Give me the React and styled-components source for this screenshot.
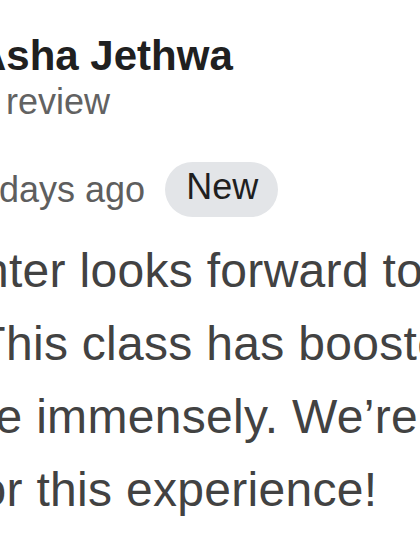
import React from 'react';
import styled, { createGlobalStyle } from 'styled-components';

const GlobalStyle = createGlobalStyle`
    html, body {
        margin: 0;
        padding: 0;
        background: #ffffff;
    }
    body {
        font-family: 'Liberation Sans', Arial, sans-serif;
    }
`;

const Viewport = styled.div`
    width: 420px;
    height: 560px;
    overflow: hidden;
    background: #ffffff;
`;

// the review card is zoomed in and runs past the left edge of the view
const ReviewCard = styled.article`
    margin-left: -126px;
    padding-top: 31px;
    display: flex;
    flex-direction: column;
    width: 1000px;
`;

const AuthorRow = styled.header`
    display: flex;
    align-items: flex-start;
    gap: 18px;
`;

const Avatar = styled.div`
    width: 84px;
    height: 84px;
    flex: none;
    border-radius: 50%;
    background: #7b5ea7;
    color: #fff;
    font-size: 40px;
    display: flex;
    align-items: center;
    justify-content: center;
`;

const AuthorInfo = styled.div`
    display: flex;
    flex-direction: column;
`;

const AuthorName = styled.h3`
    margin: 0;
    font-size: 42px;
    line-height: 49px;
    font-weight: 700;
    color: #202020;
    white-space: nowrap;
`;

const AuthorMeta = styled.span`
    font-size: 36px;
    line-height: 44px;
    color: #626262;
    white-space: nowrap;
`;

const RatingRow = styled.div`
    display: flex;
    align-items: center;
    gap: 12px;
    margin-top: 38px;
    height: 55px;
`;

const Stars = styled.div`
    display: flex;
    gap: 2px;
    width: 83px;
    flex: none;
`;

const PostedAt = styled.span`
    font-size: 36px;
    line-height: 44px;
    color: #5e5e5e;
    white-space: nowrap;
`;

const NewBadge = styled.span`
    display: inline-flex;
    align-items: center;
    box-sizing: border-box;
    height: 55px;
    padding: 0 20px 5px 21px;
    margin-left: 8px;
    border-radius: 28px;
    background: #e3e5e8;
    color: #1f1f1f;
    font-size: 36px;
    line-height: 44px;
`;

const ReviewText = styled.p`
    margin: 17px 0 0;
    font-size: 48px;
    line-height: 73px;
    letter-spacing: 0.3px;
    color: #424242;
`;

const TextLine = styled.span`
    display: block;
    white-space: nowrap;
`;

function Star() {
    return (
        <svg width="15" height="15" viewBox="0 0 24 24">
            <path
                d="M12 2l2.9 6.6 7.1.6-5.4 4.7 1.6 7-6.2-3.7-6.2 3.7 1.6-7L2 9.2l7.1-.6z"
                fill="#fbbc04"
            />
        </svg>
    );
}

const lines = [
    'daughter looks forward to class, and we love',
    'this. This class has boosted her confidence and',
    'morale immensely. We\u2019re so grateful. Thank',
    'you for this experience!',
];

function App() {
    return (
        <Viewport>
            <GlobalStyle />
            <ReviewCard>
                <AuthorRow>
                    <Avatar>A</Avatar>
                    <AuthorInfo>
                        <AuthorName>Asha Jethwa</AuthorName>
                        <AuthorMeta>1 review</AuthorMeta>
                    </AuthorInfo>
                </AuthorRow>

                <RatingRow>
                    <Stars>
                        {[0, 1, 2, 3, 4].map((i) => <Star key={i} />)}
                    </Stars>
                    <PostedAt>2 days ago</PostedAt>
                    <NewBadge>New</NewBadge>
                </RatingRow>

                <ReviewText>
                    {lines.map((line) => (
                        <TextLine key={line}>{line}</TextLine>
                    ))}
                </ReviewText>
            </ReviewCard>
        </Viewport>
    );
}

export default App;
